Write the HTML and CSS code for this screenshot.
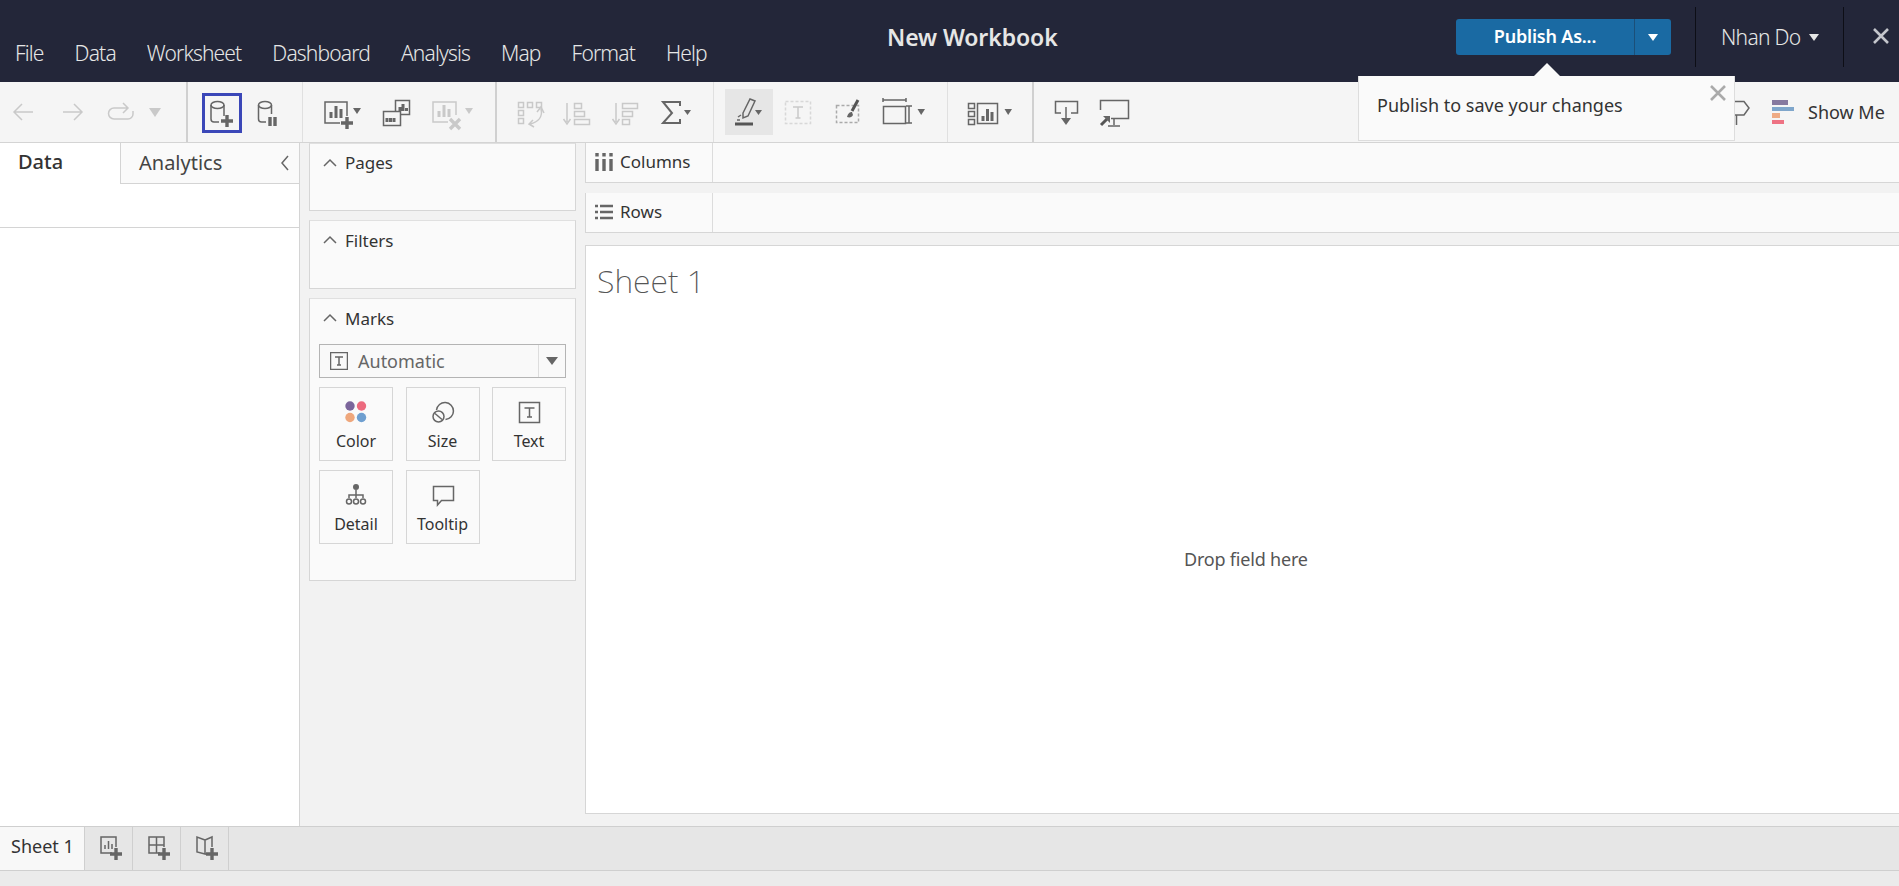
FILE: index.html
```html
<!DOCTYPE html>
<html>
  <head>
    <title>New Workbook</title>
    <link rel="stylesheet" href="styles.css">
  </head>
  <body>
    <header class="topbar">
      <nav class="menu">
        <span>File</span><span>Data</span><span>Worksheet</span><span>Dashboard</span><span>Analysis</span><span>Map</span><span>Format</span><span>Help</span>
      </nav>
      <div class="title">New Workbook</div>
      <div class="publish">
        <div class="publish-main">Publish As...</div>
        <div class="publish-drop"><i class="caret-white"></i></div>
      </div>
      <div class="user">Nhan Do <i class="caret-white"></i></div>
      <div class="close-app">
        <svg width="18" height="18" viewBox="0 0 18 18"><path d="M2 2L16 16M16 2L2 16" stroke="#c4c6cc" stroke-width="2.6" fill="none"/></svg>
      </div>
    </header>

    <div class="popover">
      <p>Publish to save your changes</p>
      <svg class="popover-x" width="18" height="18" viewBox="0 0 18 18"><path d="M2 2L16 16M16 2L2 16" stroke="#aaa" stroke-width="2.6" fill="none"/></svg>
    </div>

    <div class="toolbar">
      <div class="group group-a">
        <div class="tool"><svg viewBox="0 0 48 46"><path d="M33 23H14M22 15L14 23L22 31" class="s-off"/></svg></div>
        <div class="tool"><svg viewBox="0 0 48 46"><path d="M15 23H34M26 15L34 23L26 31" class="s-off"/></svg></div>
        <div class="tool"><svg viewBox="0 0 48 46"><path d="M31 19H18a5.500 5.500 0 0 0 0 11H32a5 5 0 0 0 5-5V22M27 14L32 19L27 24" class="s-off"/></svg></div>
        <div class="tool tool-caret"><svg viewBox="0 0 22 46"><path d="M5 19H17L11 28Z" class="f-off"/></svg></div>
      </div>
      <div class="group group-b">
        <div class="tool tool-focus"><svg viewBox="0 0 48 46"><ellipse cx="20.500" cy="16" rx="6.500" ry="3.500" class="s-on"/><path d="M14 16V30a3 3 0 0 0 3 3H22M27 16V27" class="s-on"/><path d="M30 26V38M24 32H36" class="s-thick"/></svg></div>
        <div class="tool"><svg viewBox="0 0 48 46"><ellipse cx="20" cy="16" rx="6.500" ry="3.500" class="s-on"/><path d="M13.500 16V30a3 3 0 0 0 3 3H21M26.500 16V25" class="s-on"/><path d="M25 28V37M30 28V37" class="s-thick"/></svg></div>
      </div>
      <div class="group group-c">
        <div class="tool"><svg viewBox="0 0 48 46"><path d="M22 34H7V13H29V27" class="s-on"/><path d="M13 29V23M18 29V17M23 29V20" class="s-bar"/><path d="M29 28V40M23 34H35" class="s-thick"/><path d="M35 19H43L39 25Z" class="f-on"/></svg></div>
        <div class="tool"><svg viewBox="0 0 48 46"><rect x="23.500" y="11.500" width="14" height="14" class="s-on"/><rect x="11.500" y="22.500" width="17" height="14" fill="#f5f5f5" class="s-box"/><path d="M28 22V18M31 22V15M34.500 22V19M15 33V29M18.500 33V29M22 33V29" class="s-bar"/></svg></div>
        <div class="tool"><svg viewBox="0 0 48 46"><path d="M22 33H7V13H30V26" class="s-off"/><path d="M13 28V22M18 28V16M23 28V20" class="s-bar-off"/><path d="M24 30L34 40M34 30L24 40" class="s-thick-off"/><path d="M39 19H47L43 25Z" class="f-off"/></svg></div>
      </div>
      <div class="group group-d">
        <div class="tool"><svg viewBox="0 0 48 46"><path d="M12.500 13.500h5v5h-5zM21.500 13.500h5v5h-5zM30.500 13.500h5v5h-5zM12.500 21.500h5v5h-5zM12.500 29.500h5v5h-5z" class="s-off"/><path d="M35 20C37 28 32 33 24 35M31 23L35 18L38 24M27 31L23 35L28 38" class="s-off"/></svg></div>
        <div class="tool"><svg viewBox="0 0 48 46"><path d="M13 14V33M9.500 30L13 35L16.500 30" class="s-off"/><path d="M20.500 14.500h7v5h-7zM20.500 22.500h10v5h-10zM20.500 30.500h15v5h-15z" class="s-off"/></svg></div>
        <div class="tool"><svg viewBox="0 0 48 46"><path d="M14 14V33M10.500 30L14 35L17.500 30" class="s-off"/><path d="M20.500 14.500h15v5h-15zM20.500 22.500h10v5h-10zM20.500 30.500h7v5h-7z" class="s-off"/></svg></div>
        <div class="tool tool-wide"><svg viewBox="0 0 54 46"><path d="M30 17V13H13L22 24L13 34H30V30" class="s-sigma"/><path d="M34 21H41L37.500 26Z" class="f-on"/></svg></div>
      </div>
      <div class="group group-e">
        <div class="tool tool-active"><svg viewBox="0 0 48 46"><path d="M18 24L25 10L30 12L23 27L18 29Z" class="s-on"/><path d="M13 28L16 26M12 31H15" class="s-on"/><path d="M10 35H28" class="s-heavy"/><path d="M30 21H37L33.500 26Z" class="f-on"/></svg></div>
        <div class="tool"><svg viewBox="0 0 48 46"><rect x="11.500" y="12.500" width="25" height="22" class="s-dash"/><path d="M19 18H29M24 18V29M21.500 29H26.500" class="s-off"/></svg></div>
        <div class="tool"><svg viewBox="0 0 48 46"><rect x="13.500" y="16.500" width="22" height="17" class="s-dash-dark"/><path d="M35 11L29 22" class="s-heavy"/><path d="M24 28C25 24 27 23 29 23L30 26C29 28 27 29 24 28Z" class="f-on"/></svg></div>
        <div class="tool tool-fit"><svg viewBox="0 0 64 46"><path d="M11 9V13M34 9V13M11 11H34" class="s-on"/><rect x="11.500" y="17.500" width="22" height="17" class="s-on"/><path d="M34 17H40M37 17V34M34 34H40" class="s-on"/><path d="M45.500 20H53L49.200 26Z" class="f-on"/></svg></div>
      </div>
      <div class="group group-f">
        <div class="tool tool-fit"><svg viewBox="0 0 64 46"><path d="M10.500 14.500h6v5h-6zM10.500 22.500h6v5h-6zM10.500 30.500h6v5h-6z" class="s-on"/><rect x="19.500" y="14.500" width="20" height="20" class="s-on"/><path d="M25 32V27M29.500 32V20M34 32V23" class="s-bar"/><path d="M46.500 20H54L50.200 26Z" class="f-on"/></svg></div>
      </div>
      <div class="group group-g">
        <div class="tool"><svg viewBox="0 0 48 46"><path d="M19 24H13.500V12.500H35.500V24H29" class="s-on"/><path d="M24 18V30" class="s-on"/><path d="M19 29H29L24 36Z" class="f-on"/></svg></div>
        <div class="tool"><svg viewBox="0 0 48 46"><path d="M10.500 21V11.500H38.500V29.500H21" class="s-on"/><path d="M24 30V36M18 37H30" class="s-on"/><path d="M11 36L18 29" class="s-heavy"/><path d="M13 27H20V34Z" class="f-on"/></svg></div>
      </div>
      <div class="tool pin"><svg viewBox="0 0 48 46"><path d="M10 12.500H23L28 19L23 26H10M15.500 26V36" class="s-on"/></svg></div>
      <div class="showme">
        <div class="showme-bars"><i class="bar-a"></i><i class="bar-b"></i><i class="bar-c"></i><i class="bar-d"></i></div>
        <span>Show Me</span>
      </div>
    </div>

    <main class="workspace">
      <aside class="side">
        <div class="tabs">
          <div class="tab-data">Data</div>
          <div class="tab-analytics">Analytics
            <svg width="10" height="16" viewBox="0 0 10 16"><path d="M8 1L2 8L8 15" class="s-on"/></svg>
          </div>
        </div>
        <div class="search-row"></div>
      </aside>

      <section class="cards">
        <div class="card card-pages">
          <div class="card-head"><svg class="chev" viewBox="0 0 14 10"><path d="M1 8L7 2L13 8" class="s-on"/></svg>Pages</div>
        </div>
        <div class="card card-filters">
          <div class="card-head"><svg class="chev" viewBox="0 0 14 10"><path d="M1 8L7 2L13 8" class="s-on"/></svg>Filters</div>
        </div>
        <div class="card card-marks">
          <div class="card-head"><svg class="chev" viewBox="0 0 14 10"><path d="M1 8L7 2L13 8" class="s-on"/></svg>Marks</div>
          <div class="mark-select">
            <svg width="18" height="18" viewBox="0 0 18 18"><rect x="0.500" y="0.500" width="17" height="17" class="s-on"/><path d="M5 5H13M9 5V13M7 13H11" class="s-on"/></svg>
            <span>Automatic</span>
            <div class="mark-drop"><i></i></div>
          </div>
          <div class="mark-grid">
            <div class="mark-btn">
              <svg width="24" height="24" viewBox="0 0 24 24"><circle cx="6" cy="6" r="4.700" fill="#7b659b"/><circle cx="17.500" cy="6" r="4.700" fill="#ec6a7e"/><circle cx="6" cy="17.500" r="4.700" fill="#efa77c"/><circle cx="17.500" cy="17.500" r="4.700" fill="#6f9fd0"/></svg>
              <span>Color</span>
            </div>
            <div class="mark-btn">
              <svg width="24" height="24" viewBox="0 0 24 24"><path d="M5.500 10A8.500 8.500 0 1 1 14.500 19.500" class="s-on"/><circle cx="7.500" cy="16.500" r="5.500" class="s-on"/><path d="M4 13.500L11 19.500" class="s-on"/></svg>
              <span>Size</span>
            </div>
            <div class="mark-btn">
              <svg width="24" height="24" viewBox="0 0 24 24"><rect x="2.500" y="2.500" width="20" height="20" class="s-on"/><path d="M7.500 8H17.500M12.500 8V17M10 17H15" class="s-on"/></svg>
              <span>Text</span>
            </div>
            <div class="mark-btn">
              <svg width="24" height="24" viewBox="0 0 24 24"><circle cx="12" cy="4" r="3" fill="#666"/><path d="M12 7V12M5 15V12H19V15M12 12V15" class="s-on"/><circle cx="5" cy="18.500" r="2.500" class="s-on"/><circle cx="12" cy="18.500" r="2.500" class="s-on"/><circle cx="19" cy="18.500" r="2.500" class="s-on"/></svg>
              <span>Detail</span>
            </div>
            <div class="mark-btn">
              <svg width="24" height="24" viewBox="0 0 24 24"><path d="M2.500 3.500H22.500V17.500H10.500L6.500 22V17.500H2.500Z" class="s-on"/></svg>
              <span>Tooltip</span>
            </div>
          </div>
        </div>
      </section>

      <section class="stage">
        <div class="shelf">
          <div class="shelf-label">
            <svg width="18" height="18" viewBox="0 0 18 18"><path d="M2 6V18M9 6V18M16 6V18" stroke="#666" stroke-width="3.400"/><path d="M2 0V3.500M9 0V3.500M16 0V3.500" stroke="#666" stroke-width="3.400"/></svg>
            Columns
          </div>
        </div>
        <div class="shelf">
          <div class="shelf-label">
            <svg width="18" height="18" viewBox="0 0 18 18"><path d="M0 3H3M5 3H18M0 9H3M5 9H18M0 15H3M5 15H18" stroke="#666" stroke-width="2.600"/></svg>
            Rows
          </div>
        </div>
        <div class="viewer">
          <h1 class="sheet-title">Sheet 1</h1>
          <div class="drop-hint">Drop field here</div>
        </div>
      </section>
    </main>

    <footer class="sheetbar">
      <div class="sheet-tab">Sheet 1</div>
      <div class="sheet-new"><svg viewBox="0 0 30 30"><path d="M15 20H4V4H19V14" class="s-on"/><path d="M8 16V12M11.500 16V8M15 16V11" class="s-thin"/><path d="M19 15V27M13 21H25" class="s-thick"/></svg></div>
      <div class="sheet-new"><svg viewBox="0 0 30 30"><path d="M15 20H4V4H19V14M4 12H19M11.500 4V20" class="s-on"/><path d="M19 15V27M13 21H25" class="s-thick"/></svg></div>
      <div class="sheet-new"><svg viewBox="0 0 30 30"><path d="M12 7L4 4V19L12 21V7L19 4V14M12 21H14" class="s-on"/><path d="M19 15V27M13 21H25" class="s-thick"/></svg></div>
    </footer>
    <div class="statusbar"></div>
  </body>
</html>
```
FILE: styles.css
```css
* {
  box-sizing: border-box;
}
html,
body {
  height: 100%;
}
body {
  margin: 0;
  overflow: hidden;
  display: flex;
  flex-direction: column;
  font-family: "Noto Sans", Roboto, sans-serif;
  font-size: 16px;
  color: #333;
  background-color: #f2f2f2;
}

/* svg stroke styles */
.s-on {
  fill: none;
  stroke: #666;
  stroke-width: 1.5;
}
.s-box {
  stroke: #666;
  stroke-width: 1.5;
}
.s-off {
  fill: none;
  stroke: #c9c9c9;
  stroke-width: 1.5;
}
.s-bar {
  fill: none;
  stroke: #666;
  stroke-width: 3;
}
.s-bar-off {
  fill: none;
  stroke: #c9c9c9;
  stroke-width: 3;
}
.s-thin {
  fill: none;
  stroke: #666;
  stroke-width: 1.5;
}
.s-thick {
  fill: none;
  stroke: #666;
  stroke-width: 3.4;
}
.s-thick-off {
  fill: none;
  stroke: #c9c9c9;
  stroke-width: 3.4;
}
.s-heavy {
  fill: none;
  stroke: #555;
  stroke-width: 3;
}
.s-sigma {
  fill: none;
  stroke: #666;
  stroke-width: 2;
}
.s-dash {
  fill: none;
  stroke: #d8d8d8;
  stroke-width: 1.5;
  stroke-dasharray: 3 2;
}
.s-dash-dark {
  fill: none;
  stroke: #aaa;
  stroke-width: 1.5;
  stroke-dasharray: 3 2;
}
.f-on {
  fill: #666;
}
.f-off {
  fill: #c9c9c9;
}

/* top bar */
.topbar {
  flex: none;
  height: 82px;
  display: flex;
  background-color: #232639;
  color: #e6e6e6;
}
.menu {
  flex: 0 0 725px;
  display: flex;
  gap: 31px;
  padding: 38px 0 0 15px;
  font-size: 21px;
  font-weight: 300;
  line-height: 30px;
  letter-spacing: -0.85px;
}
.title {
  flex: 0 0 731px;
  padding: 20px 0 0 162px;
  font-size: 23px;
  font-weight: 600;
  line-height: 34px;
  letter-spacing: -0.1px;
}
.publish {
  flex: 0 0 215px;
  display: flex;
  height: 36px;
  margin-top: 19px;
  border-radius: 3px;
  overflow: hidden;
  background-color: #1a6aa3;
  color: #fff;
  font-size: 18px;
  font-weight: 600;
  line-height: 34px;
}
.publish-main {
  flex: 1;
  text-align: center;
  letter-spacing: -0.2px;
}
.publish-drop {
  flex: 0 0 37px;
  border-left: 1px solid #1b4f78;
  display: flex;
  align-items: center;
  justify-content: center;
}
.caret-white {
  display: inline-block;
  border-left: 5px solid transparent;
  border-right: 5px solid transparent;
  border-top: 7px solid #fff;
}
.user {
  flex: 0 0 148px;
  height: 60px;
  margin: 7px 0 0 24px;
  padding: 8px 0 0 25px;
  border-left: 1px solid #0d0e16;
  font-size: 21px;
  font-weight: 300;
  line-height: 44px;
  letter-spacing: -0.7px;
}
.user .caret-white {
  margin-left: 4px;
  vertical-align: 4px;
  border-top-color: #e6e6e6;
}
.close-app {
  flex: 1;
  height: 60px;
  margin-top: 7px;
  padding: 20px 9px 0 0;
  display: flex;
  align-items: flex-start;
  justify-content: flex-end;
  border-left: 1px solid #0d0e16;
}

/* popover over the toolbar */
.popover {
  position: absolute;
  left: 1358px;
  top: 76px;
  width: 377px;
  height: 65px;
  z-index: 2;
  background-color: #fafafa;
  border: 1px solid #ddd;
  border-top: 0;
}
.popover::before {
  content: "";
  position: absolute;
  left: 175px;
  top: -13px;
  border-left: 13px solid transparent;
  border-right: 13px solid transparent;
  border-bottom: 13px solid #fafafa;
}
.popover p {
  margin: 0;
  padding: 15px 0 0 18px;
  font-size: 18px;
  line-height: 28px;
  color: #333;
}
.popover-x {
  position: absolute;
  right: 7px;
  top: 8px;
}

/* toolbar */
.toolbar {
  flex: none;
  height: 61px;
  display: flex;
  background-color: #f5f5f5;
  border-bottom: 1px solid #d4d4d4;
}
.group {
  flex: none;
  height: 60px;
  display: flex;
  align-items: center;
  border-right: 1px solid #e0e0e0;
}
.group-a {
  width: 188px;
  border-right: 2px solid #d0d0d0;
}
.group-b {
  width: 115px;
  padding-left: 9px;
}
.group-c {
  width: 194px;
  padding-left: 15px;
  gap: 6px;
  border-right: 2px solid #d0d0d0;
}
.group-d {
  width: 217px;
  padding-left: 9px;
}
.group-e {
  width: 234px;
  padding-left: 11px;
}
.group-e .tool + .tool {
  margin-left: 1px;
}
.group-f {
  width: 86px;
  padding-left: 10px;
  border-right: 2px solid #d0d0d0;
}
.group-g {
  width: 110px;
  padding-left: 8px;
  border: 0;
}
.tool {
  flex: none;
  position: relative;
  width: 48px;
  height: 46px;
}
.tool svg {
  display: block;
  width: 100%;
  height: 100%;
}
.tool-caret {
  width: 22px;
}
.tool-wide {
  width: 54px;
}
.tool-fit {
  width: 64px;
}
.tool-active {
  background-color: #e6e6e6;
}
.tool-focus::after {
  content: "";
  position: absolute;
  left: 5px;
  top: 4px;
  width: 34px;
  height: 34px;
  border: 3px solid #3b47b8;
}
.pin {
  align-self: center;
  margin-left: 577px;
}
.showme {
  display: flex;
  align-items: center;
  margin-left: 3px;
  gap: 14px;
  font-size: 18px;
  color: #333;
}
.showme-bars {
  display: flex;
  flex-direction: column;
  gap: 2px;
  width: 22px;
}
.showme-bars i {
  display: block;
  height: 4.500px;
}
.bar-a {
  width: 16px;
  background-color: #86799f;
}
.bar-b {
  width: 22px;
  background-color: #7fa6cb;
}
.bar-c {
  width: 8px;
  background-color: #eeab85;
}
.bar-d {
  width: 12px;
  background-color: #ee7283;
}

/* main area */
.workspace {
  flex: 1;
  min-height: 0;
  display: flex;
}
.side {
  flex: 0 0 300px;
  background-color: #fff;
  border-right: 1px solid #d4d4d4;
}
.tabs {
  display: flex;
  height: 41px;
  line-height: 38px;
  font-size: 20px;
}
.tab-data {
  flex: 0 0 120px;
  padding-left: 18px;
  font-weight: 500;
  color: #333;
}
.tab-analytics {
  flex: 1;
  display: flex;
  align-items: center;
  justify-content: space-between;
  padding: 0 9px 0 18px;
  background-color: #fafafa;
  border-left: 1px solid #d4d4d4;
  border-bottom: 1px solid #d4d4d4;
  color: #444;
}
.search-row {
  height: 44px;
  border-bottom: 1px solid #d4d4d4;
}
.cards {
  flex: 0 0 285px;
  padding: 0 9px;
  display: flex;
  flex-direction: column;
  gap: 9px;
}
.card {
  background-color: #fafafa;
  border: 1px solid #d6d6d6;
  border-top-color: #e0e0e0;
}
.card-pages {
  height: 68px;
}
.card-filters {
  height: 69px;
}
.card-marks {
  height: 283px;
}
.card-head {
  display: flex;
  align-items: center;
  gap: 8px;
  height: 37px;
  padding-left: 13px;
  font-size: 17px;
  color: #333;
}
.card-marks .card-head,
.card-filters .card-head {
  height: 38px;
}
.chev {
  width: 14px;
  height: 10px;
}
.mark-select {
  display: flex;
  align-items: center;
  height: 34px;
  margin: 7px 9px 0;
  padding-left: 10px;
  background-color: #f9f9f9;
  border: 1px solid #b4b4b4;
  font-size: 18px;
  color: #666;
}
.mark-select span {
  margin-left: 10px;
}
.mark-drop {
  margin-left: auto;
  width: 27px;
  height: 100%;
  border-left: 1px solid #ddd;
  display: flex;
  align-items: center;
  justify-content: center;
}
.mark-drop i {
  border-left: 6px solid transparent;
  border-right: 6px solid transparent;
  border-top: 8px solid #666;
}
.mark-grid {
  display: grid;
  grid-template-columns: 74px 74px 74px;
  grid-auto-rows: 74px;
  column-gap: 12.500px;
  row-gap: 9px;
  margin: 9px 9px 0;
}
.mark-btn {
  display: flex;
  flex-direction: column;
  align-items: center;
  padding-top: 12px;
  border: 1px solid #d6d6d6;
  font-size: 16px;
  color: #333;
}
.mark-btn span {
  margin-top: 5px;
  line-height: 24px;
}
.stage {
  flex: 1;
  min-width: 0;
  display: flex;
  flex-direction: column;
  padding-bottom: 12px;
}
.shelf {
  flex: none;
  height: 40px;
  margin-bottom: 10px;
  background-color: #fafafa;
  border: 1px solid #d6d6d6;
  border-top: 0;
  border-right: 0;
}
.shelf-label {
  width: 127px;
  height: 100%;
  display: flex;
  align-items: center;
  gap: 7px;
  padding: 0 0 2px 9px;
  border-right: 1px solid #dcdcdc;
  font-size: 17px;
  color: #333;
}
.viewer {
  flex: 1;
  margin-top: 2px;
  position: relative;
  background-color: #fff;
  border: 1px solid #d6d6d6;
  border-right: 0;
}
.sheet-title {
  margin: 13px 0 0 11px;
  font-size: 32px;
  font-weight: 200;
  line-height: 44px;
  color: #555;
}
.drop-hint {
  position: absolute;
  left: 598px;
  top: 301px;
  font-size: 18px;
  color: #555;
  letter-spacing: -0.2px;
}

/* bottom */
.sheetbar {
  flex: none;
  height: 45px;
  display: flex;
  background-color: #e6e6e6;
  border-top: 1px solid #cfcfcf;
  border-bottom: 1px solid #cfcfcf;
}
.sheet-tab {
  flex: 0 0 85px;
  padding-left: 11px;
  background-color: #f8f8f8;
  border-right: 1px solid #cfcfcf;
  font-size: 18px;
  line-height: 38px;
  color: #333;
}
.sheet-new {
  flex: 0 0 48px;
  padding: 6px 0 0 12px;
  border-right: 1px solid #cfcfcf;
}
.sheet-new svg {
  display: block;
  width: 30px;
  height: 30px;
}
.statusbar {
  flex: none;
  height: 15px;
  background-color: #ebebeb;
}
```
